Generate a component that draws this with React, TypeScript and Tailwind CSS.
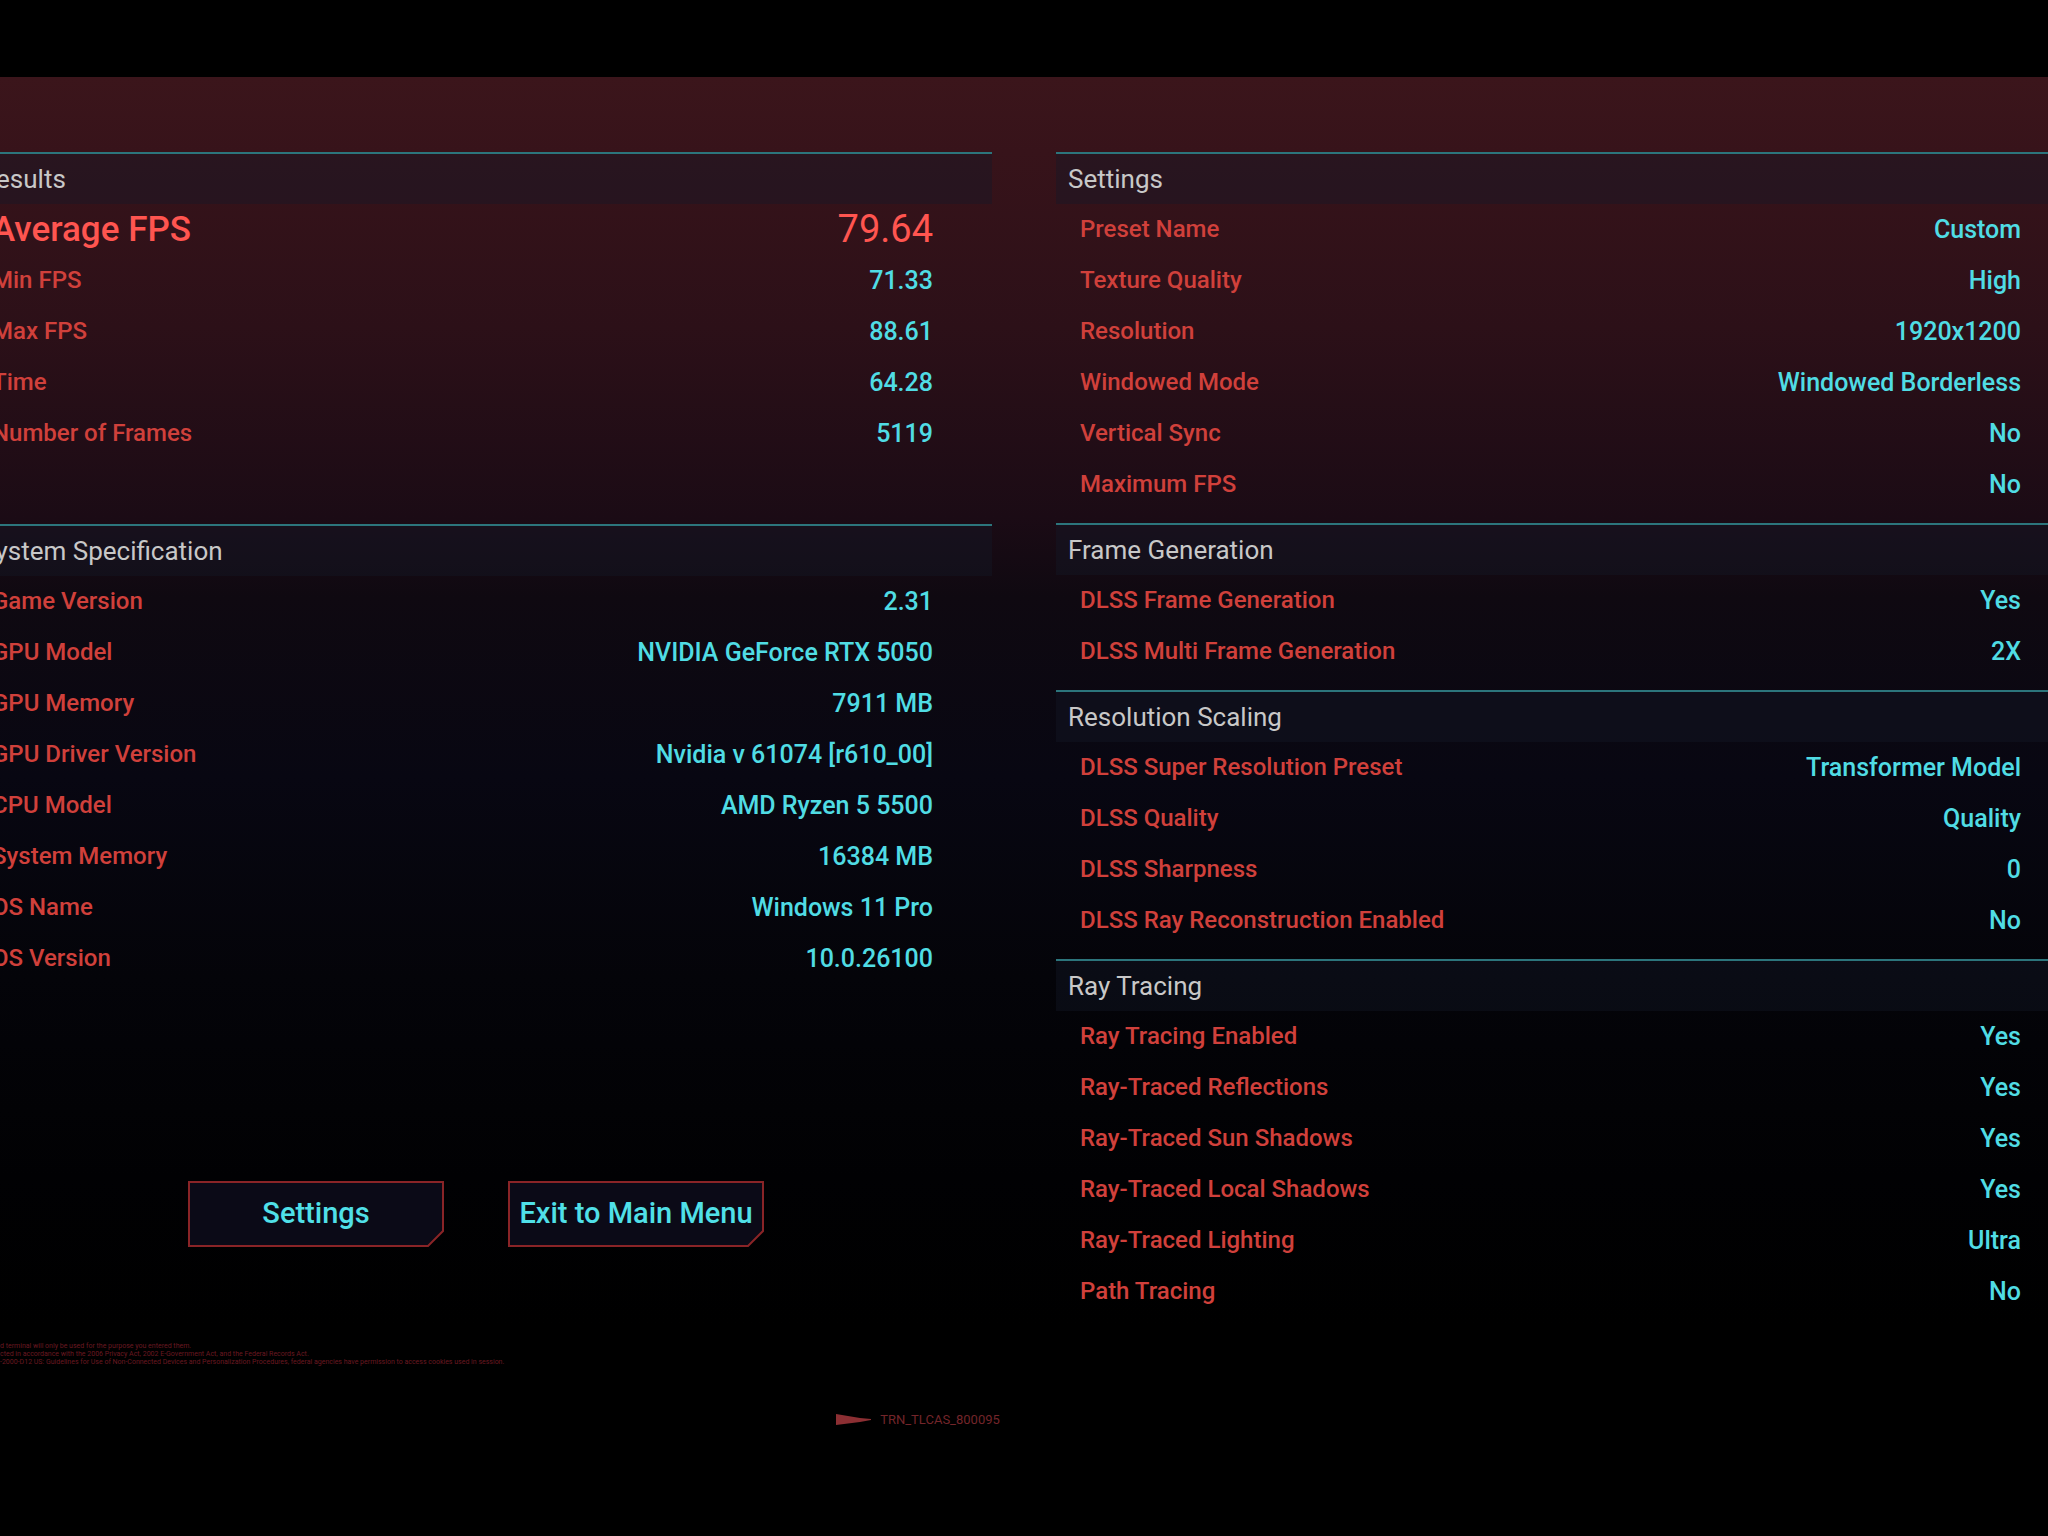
import React from 'react';

interface Entry {
  label: string;
  value: string;
  highlight?: boolean;
}

interface SectionProps {
  title: string;
  entries: Entry[];
  className?: string;
}

const RESULTS: Entry[] = [
  { label: 'Average FPS', value: '79.64', highlight: true },
  { label: 'Min FPS', value: '71.33' },
  { label: 'Max FPS', value: '88.61' },
  { label: 'Time', value: '64.28' },
  { label: 'Number of Frames', value: '5119' },
];

const SYSTEM: Entry[] = [
  { label: 'Game Version', value: '2.31' },
  { label: 'GPU Model', value: 'NVIDIA GeForce RTX 5050' },
  { label: 'GPU Memory', value: '7911 MB' },
  { label: 'GPU Driver Version', value: 'Nvidia v 61074 [r610_00]' },
  { label: 'CPU Model', value: 'AMD Ryzen 5 5500' },
  { label: 'System Memory', value: '16384 MB' },
  { label: 'OS Name', value: 'Windows 11 Pro' },
  { label: 'OS Version', value: '10.0.26100' },
];

const SETTINGS: Entry[] = [
  { label: 'Preset Name', value: 'Custom' },
  { label: 'Texture Quality', value: 'High' },
  { label: 'Resolution', value: '1920x1200' },
  { label: 'Windowed Mode', value: 'Windowed Borderless' },
  { label: 'Vertical Sync', value: 'No' },
  { label: 'Maximum FPS', value: 'No' },
];

const FRAME_GENERATION: Entry[] = [
  { label: 'DLSS Frame Generation', value: 'Yes' },
  { label: 'DLSS Multi Frame Generation', value: '2X' },
];

const RESOLUTION_SCALING: Entry[] = [
  { label: 'DLSS Super Resolution Preset', value: 'Transformer Model' },
  { label: 'DLSS Quality', value: 'Quality' },
  { label: 'DLSS Sharpness', value: '0' },
  { label: 'DLSS Ray Reconstruction Enabled', value: 'No' },
];

const RAY_TRACING: Entry[] = [
  { label: 'Ray Tracing Enabled', value: 'Yes' },
  { label: 'Ray-Traced Reflections', value: 'Yes' },
  { label: 'Ray-Traced Sun Shadows', value: 'Yes' },
  { label: 'Ray-Traced Local Shadows', value: 'Yes' },
  { label: 'Ray-Traced Lighting', value: 'Ultra' },
  { label: 'Path Tracing', value: 'No' },
];

function Section({ title, entries, className = 'pb-[13px]' }: SectionProps) {
  return (
    <section className={className}>
      <h2 className="h-[52px] border-t-2 border-[#2c757c] bg-[#141828]/40 pl-3 text-[26px] leading-[51px] text-[#c8c8c8]">
        {title}
      </h2>
      <table className="w-full leading-[51px]">
        <tbody>
          {entries.map(({ label, value, highlight }) => (
            <tr key={label} className={highlight ? 'text-[#ff5550]' : ''}>
              <th
                scope="row"
                className={
                  highlight
                    ? 'h-[51px] p-0 pl-6 text-left text-[35px] font-medium'
                    : 'h-[51px] p-0 pl-6 text-left text-[24px] font-medium text-[#d0403b]'
                }
              >
                {label}
              </th>
              <td
                className={
                  highlight
                    ? 'p-0 pr-[59px] text-right text-[38px]'
                    : 'p-0 pr-[59px] text-right text-[25px] font-medium text-[#50dce4]'
                }
              >
                {value}
              </td>
            </tr>
          ))}
        </tbody>
      </table>
    </section>
  );
}

function MenuButton({ children }: { children: React.ReactNode }) {
  return (
    <button type="button" className="relative h-[66px] w-64 text-[29px] font-medium text-[#50e0e8]">
      <svg className="absolute inset-0 h-full w-full" viewBox="0 0 256 66" aria-hidden="true">
        <path d="M1 1H255V50L240 65H1Z" fill="#0b0a17" stroke="#8a2427" strokeWidth="2" />
      </svg>
      <span className="relative whitespace-nowrap">{children}</span>
    </button>
  );
}

export default function App() {
  return (
    <div className="min-h-screen overflow-hidden bg-black pt-[77px] font-['Roboto',sans-serif]">
      <main className="bg-[linear-gradient(to_bottom,#3b151b_0px,#37131a_75px,#2c1018_250px,#1b0b15_440px,#0f0911_520px,#080712_700px,#040409_900px,#010103_1100px,#000000_1250px)] pt-[75px]">
        <div className="-mx-8 grid grid-cols-2 gap-16">
          <div className="flex flex-col">
            <Section title="Results" entries={RESULTS} className="pb-[65px]" />
            <Section title="System Specification" entries={SYSTEM} className="pb-[197px]" />
            <div className="flex justify-center gap-16 pr-2">
              <MenuButton>Settings</MenuButton>
              <MenuButton>Exit to Main Menu</MenuButton>
            </div>
          </div>
          <div>
            <Section title="Settings" entries={SETTINGS} />
            <Section title="Frame Generation" entries={FRAME_GENERATION} />
            <Section title="Resolution Scaling" entries={RESOLUTION_SCALING} />
            <Section title="Ray Tracing" entries={RAY_TRACING} />
          </div>
        </div>
        <footer>
          <div className="pt-3 text-[7px] leading-[8px] text-[#6a1820]">
            <p>d terminal will only be used for the purpose you entered them.</p>
            <p>cted in accordance with the 2006 Privacy Act, 2002 E-Government Act, and the Federal Records Act.</p>
            <p>-2000-D12 US: Guidelines for Use of Non-Connected Devices and Personalization Procedures, federal agencies have permission to access cookies used in session.</p>
          </div>
          <div className="mt-11 flex items-center justify-center gap-2 pr-[212px] text-[13px] text-[#73252a]">
            <svg className="h-3 w-9" viewBox="0 0 36 12" aria-hidden="true">
              <path d="M0 0L24 4L35 5V6L24 8L0 11Z" fill="#8c2f33" />
            </svg>
            <span>TRN_TLCAS_800095</span>
          </div>
        </footer>
      </main>
    </div>
  );
}
